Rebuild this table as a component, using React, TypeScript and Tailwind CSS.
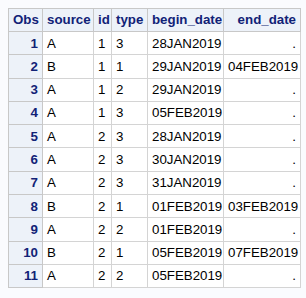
const rows: [number, string, number, number, string, string][] = [
  [1, "A", 1, 3, "28JAN2019", "."],
  [2, "B", 1, 1, "29JAN2019", "04FEB2019"],
  [3, "A", 1, 2, "29JAN2019", "."],
  [4, "A", 1, 3, "05FEB2019", "."],
  [5, "A", 2, 3, "28JAN2019", "."],
  [6, "A", 2, 3, "30JAN2019", "."],
  [7, "A", 2, 3, "31JAN2019", "."],
  [8, "B", 2, 1, "01FEB2019", "03FEB2019"],
  [9, "A", 2, 2, "01FEB2019", "."],
  [10, "B", 2, 1, "05FEB2019", "07FEB2019"],
  [11, "A", 2, 2, "05FEB2019", "."],
];

const th = "h-[23px] border border-[#c8c8c8] bg-[#edf2f9] px-[4px] font-bold text-[#112277] align-middle";
const td = "h-[23.3px] border border-[#d4d4d4] px-[4px] align-middle text-black";

export default function App() {
  return (
    <div className="min-h-[298px] w-[306px] bg-[#fafbfe] p-2 font-['Liberation_Sans',Arial,sans-serif] text-[13.3px]">
      <table className="w-[292px] table-fixed border-collapse border border-[#c1c1c1] bg-white leading-none">
        <colgroup>
          <col className="w-[34px]" />
          <col className="w-[51px]" />
          <col className="w-[18px]" />
          <col className="w-[36px]" />
          <col className="w-[76px]" />
          <col className="w-[77px]" />
        </colgroup>
        <thead>
          <tr>
            <th className={`${th} text-right`}>Obs</th>
            <th className={`${th} text-left`}>source</th>
            <th className={`${th} text-left`}>id</th>
            <th className={`${th} text-left`}>type</th>
            <th className={`${th} text-left`}>begin_date</th>
            <th className={`${th} text-right`}>end_date</th>
          </tr>
        </thead>
        <tbody>
          {rows.map((r) => (
            <tr key={r[0]}>
              <th className={`${th} text-right`}>{r[0]}</th>
              <td className={`${td} text-left`}>{r[1]}</td>
              <td className={`${td} text-left`}>{r[2]}</td>
              <td className={`${td} text-left`}>{r[3]}</td>
              <td className={`${td} text-left`}>{r[4]}</td>
              <td className={`${td} text-right`}>{r[5]}</td>
            </tr>
          ))}
        </tbody>
      </table>
    </div>
  );
}
